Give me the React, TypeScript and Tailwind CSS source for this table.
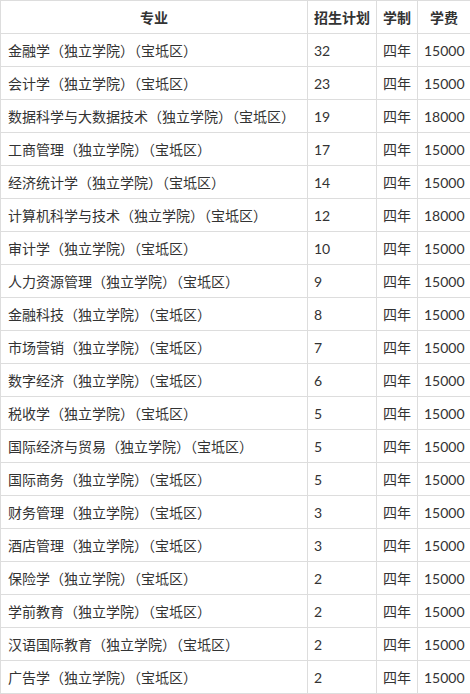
const rows: [string, string, string, string][] = [
  ["金融学（独立学院）（宝坻区）", "32", "四年", "15000"],
  ["会计学（独立学院）（宝坻区）", "23", "四年", "15000"],
  ["数据科学与大数据技术（独立学院）（宝坻区）", "19", "四年", "18000"],
  ["工商管理（独立学院）（宝坻区）", "17", "四年", "15000"],
  ["经济统计学（独立学院）（宝坻区）", "14", "四年", "15000"],
  ["计算机科学与技术（独立学院）（宝坻区）", "12", "四年", "18000"],
  ["审计学（独立学院）（宝坻区）", "10", "四年", "15000"],
  ["人力资源管理（独立学院）（宝坻区）", "9", "四年", "15000"],
  ["金融科技（独立学院）（宝坻区）", "8", "四年", "15000"],
  ["市场营销（独立学院）（宝坻区）", "7", "四年", "15000"],
  ["数字经济（独立学院）（宝坻区）", "6", "四年", "15000"],
  ["税收学（独立学院）（宝坻区）", "5", "四年", "15000"],
  ["国际经济与贸易（独立学院）（宝坻区）", "5", "四年", "15000"],
  ["国际商务（独立学院）（宝坻区）", "5", "四年", "15000"],
  ["财务管理（独立学院）（宝坻区）", "3", "四年", "15000"],
  ["酒店管理（独立学院）（宝坻区）", "3", "四年", "15000"],
  ["保险学（独立学院）（宝坻区）", "2", "四年", "15000"],
  ["学前教育（独立学院）（宝坻区）", "2", "四年", "15000"],
  ["汉语国际教育（独立学院）（宝坻区）", "2", "四年", "15000"],
  ["广告学（独立学院）（宝坻区）", "2", "四年", "15000"],
];

export default function App() {
  return (
    <div className="bg-white w-[470px] text-[14px] text-[#333] font-['Lato','Noto_Sans_CJK_SC',sans-serif]">
      <table className="w-[470px] table-fixed border-collapse">
        <colgroup>
          <col className="w-[307px]" />
          <col className="w-[69px]" />
          <col className="w-[41px]" />
          <col className="w-[53px]" />
        </colgroup>
        <thead>
          <tr className="h-[33px]">
            <th className="border border-[#dddddd] font-bold text-center">专业</th>
            <th className="border border-[#dddddd] font-bold text-center px-0">招生计划</th>
            <th className="border border-[#dddddd] font-bold text-center px-0">学制</th>
            <th className="border border-[#dddddd] font-bold text-center px-0">学费</th>
          </tr>
        </thead>
        <tbody>
          {rows.map((r, i) => (
            <tr key={i} className="h-[33px]">
              <td className="border border-[#dddddd] pl-[7px] whitespace-nowrap">{r[0]}</td>
              <td className="border border-[#dddddd] pl-[6px]">{r[1]}</td>
              <td className="border border-[#dddddd] pl-[6px] whitespace-nowrap">{r[2]}</td>
              <td className="border border-[#dddddd] pl-[6px]">{r[3]}</td>
            </tr>
          ))}
        </tbody>
      </table>
    </div>
  );
}
